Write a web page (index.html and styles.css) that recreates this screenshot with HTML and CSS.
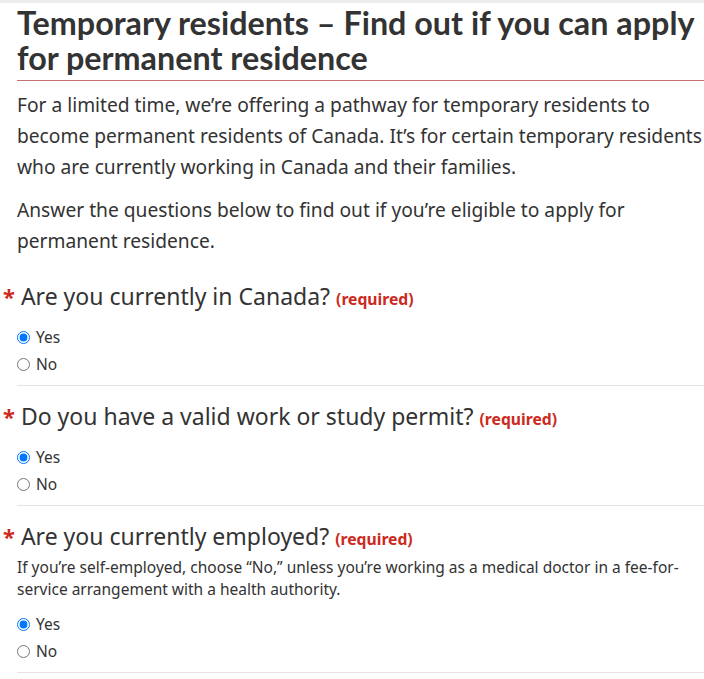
FILE: index.html
```html
<!DOCTYPE html>
<html lang="en">
<head>
<meta charset="utf-8">
<title>Temporary residents</title>
<link rel="stylesheet" href="styles.css">
</head>
<body>
<div class="topbar"></div>
<main class="page">
  <h1 class="title">Temporary residents – Find out if you can apply for permanent residence</h1>
  <p class="lead">For a limited time, we’re offering a pathway for temporary residents to become permanent residents of Canada. It’s for certain temporary residents who are currently working in Canada and their families.</p>
  <p class="lead">Answer the questions below to find out if you’re eligible to apply for permanent residence.</p>

  <fieldset class="question first">
    <legend class="q-legend"><span class="star">*</span> Are you currently in Canada? <strong class="req">(required)</strong></legend>
    <label class="opt"><input type="radio" name="q1" checked> Yes</label>
    <label class="opt"><input type="radio" name="q1"> No</label>
  </fieldset>

  <fieldset class="question">
    <legend class="q-legend"><span class="star">*</span> Do you have a valid work or study permit? <strong class="req">(required)</strong></legend>
    <label class="opt"><input type="radio" name="q2" checked> Yes</label>
    <label class="opt"><input type="radio" name="q2"> No</label>
  </fieldset>

  <fieldset class="question">
    <legend class="q-legend"><span class="star">*</span> Are you currently employed? <strong class="req">(required)</strong></legend>
    <p class="hint">If you’re self-employed, choose “No,” unless you’re working as a medical doctor in a fee-for-service arrangement with a health authority.</p>
    <label class="opt"><input type="radio" name="q3" checked> Yes</label>
    <label class="opt"><input type="radio" name="q3"> No</label>
  </fieldset>
</main>
</body>
</html>
```

FILE: styles.css
```css
html, body {
  margin: 0;
  padding: 0;
  background: #fff;
  overflow: hidden;
}
body {
  color: #333;
  font-family: "Noto Sans", "Open Sans", sans-serif;
}
.topbar {
  height: 3px;
  background: #ececec;
}
.page {
  width: 700px;
  padding-left: 17px;
}
.title {
  font-family: Lato, "Noto Sans", sans-serif;
  font-weight: 700;
  font-size: 32.3px;
  line-height: 35px;
  margin: 2px 0 0 0;
  padding-bottom: 5px;
  border-bottom: 1px solid #c4706f;
  color: #333;
}
.lead {
  font-size: 19.2px;
  line-height: 31px;
  margin: 8px 0 12px 0;
}
.question {
  border: 0;
  border-bottom: 1px solid #e4e4e4;
  margin: 0;
  padding: 0 0 7px 0;
  display: flex;
  flex-direction: column;
}
.question + .question {
  padding-top: 17px;
}
.question.first {
  margin-top: 27px;
}
.q-legend {
  padding: 0;
  margin-left: -14px;
  font-size: 23px;
  line-height: 27px;
  margin-bottom: 11px;
  float: left;
  width: 100%;
}
.star {
  color: #cc2a20;
  font-weight: 700;
  font-size: 22px;
}
.req {
  color: #cc2a20;
  font-weight: 700;
  font-size: 15.7px;
}
.hint {
  font-size: 15.5px;
  line-height: 22px;
  margin: -8px 0 11px 0;
  width: 690px;
}
.opt {
  display: flex;
  align-items: center;
  gap: 6px;
  font-size: 15.5px;
  line-height: 27px;
}
.opt input {
  margin: 0;
  width: 13px;
  height: 13px;
}
```
